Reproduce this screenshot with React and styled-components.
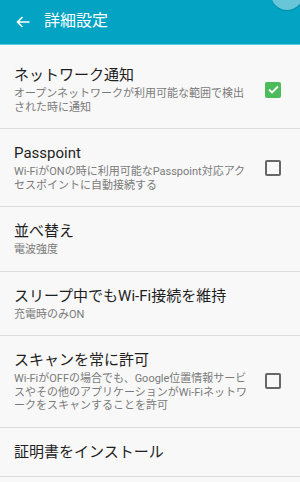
import React from "react";
import styled, { createGlobalStyle } from "styled-components";

const GlobalStyle = createGlobalStyle`
  html, body {
    margin: 0;
    padding: 0;
    background: #f8f8f8;
  }
  body {
    font-family: Roboto, "Noto Sans CJK JP", sans-serif;
  }
`;

const Screen = styled.div`
  width: 300px;
  height: 482px;
  overflow: hidden;
  background: #f8f8f8;
`;

const Header = styled.header`
  position: relative;
  height: 44px;
  background: #02a3c3;
  border-bottom: 1px solid #5ccbdf;
  display: flex;
  align-items: center;
  padding-left: 16px;
  overflow: hidden;
`;

const BackButton = styled.span`
  display: flex;
  width: 14px;
  height: 12px;
  margin-right: 14px;
  margin-top: -1px;
`;

const HeaderTitle = styled.h1`
  margin: 0;
  color: #fff;
  font-size: 16px;
  font-weight: 400;
  line-height: 20px;
  margin-top: -2px;
`;

const Bubble = styled.span`
  position: absolute;
  right: -3px;
  top: -22px;
  width: 32px;
  height: 32px;
  border-radius: 50%;
  background: #68c6d8;
  box-shadow: 0 1px 1px rgba(0, 0, 0, 0.15);
`;

const List = styled.div`
  padding-top: 6px;
`;

const Row = styled.div`
  display: flex;
  align-items: center;
  padding: 12px 19px 12px 14px;
  border-bottom: 1px solid #dcdcdc;
`;

const Texts = styled.div`
  flex: 1;
  min-width: 0;
`;

const Title = styled.div`
  font-size: 15px;
  line-height: 24px;
  color: #1e1e1e;
`;

const Sub = styled.div`
  font-size: 11px;
  line-height: 13.5px;
  color: #7a7a7a;
  padding-bottom: 2px;
`;

const Box = styled.span`
  flex: none;
  width: 16px;
  height: 16px;
  margin-left: 14px;
  box-sizing: border-box;
  border-radius: 2px;
  display: flex;
  align-items: center;
  justify-content: center;
  background: ${(p) => (p.$checked ? "#4cbb5c" : "transparent")};
  border: ${(p) => (p.$checked ? "none" : "2px solid #676767")};
`;

const Checkbox = ({ checked }) => (
  <Box $checked={checked}>
    {checked && (
      <svg width="11" height="9" viewBox="0 0 11 9">
        <polyline
          points="1,4.5 4,7.5 10,1.5"
          fill="none"
          stroke="#fff"
          strokeWidth="1.8"
        />
      </svg>
    )}
  </Box>
);

const items = [
  {
    title: "ネットワーク通知",
    sub: "オープンネットワークが利用可能な範囲で検出された時に通知",
    check: true,
  },
  {
    title: "Passpoint",
    sub: "Wi-FiがONの時に利用可能なPasspoint対応アクセスポイントに自動接続する",
    check: false,
  },
  { title: "並べ替え", sub: "電波強度" },
  { title: "スリープ中でもWi-Fi接続を維持", sub: "充電時のみON" },
  {
    title: "スキャンを常に許可",
    sub: "Wi-FiがOFFの場合でも、Google位置情報サービスやその他のアプリケーションがWi-Fiネットワークをスキャンすることを許可",
    check: false,
  },
  { title: "証明書をインストール" },
];

export default function App() {
  return (
    <Screen>
      <GlobalStyle />
      <Header>
        <BackButton>
          <svg width="14" height="12" viewBox="0 0 14 12">
            <path
              d="M13.5 6H1.5M6.5 1L1.5 6l5 5"
              fill="none"
              stroke="#fff"
              strokeWidth="1.6"
            />
          </svg>
        </BackButton>
        <HeaderTitle>詳細設定</HeaderTitle>
        <Bubble />
      </Header>
      <List>
        {items.map((it) => (
          <Row key={it.title}>
            <Texts>
              <Title>{it.title}</Title>
              {it.sub && <Sub>{it.sub}</Sub>}
            </Texts>
            {it.check !== undefined && <Checkbox checked={it.check} />}
          </Row>
        ))}
      </List>
    </Screen>
  );
}
